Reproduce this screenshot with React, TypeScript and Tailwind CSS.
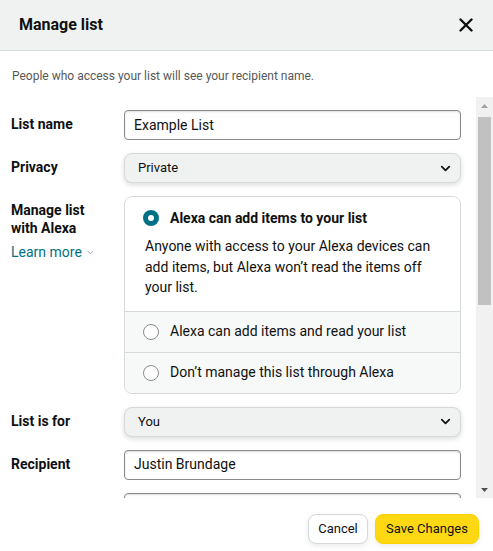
import { ChevronDown } from "lucide-react";

function Label({ children }: { children: React.ReactNode }) {
  return (
    <div className="w-[124px] shrink-0 pl-[11px] pt-[5px] text-[14px] leading-[18px] font-bold text-[#0f1111]">
      {children}
    </div>
  );
}

function Select({ value }: { value: string }) {
  return (
    <div className="flex-1 h-[30px] flex items-center justify-between pl-[13px] pr-[7px] rounded-[8px] bg-[#f0f2f2] border border-[#d5d9d9] shadow-[0_2px_5px_rgba(15,17,17,0.15)] text-[13px] text-[#0f1111]">
      <span>{value}</span>
      <ChevronDown size={15} strokeWidth={2.8} className="text-[#0f1111]" />
    </div>
  );
}

function Input({ value }: { value: string }) {
  return (
    <div className="flex-1 h-[30px] flex items-center pl-[9px] rounded-[4px] border border-[#888c8c] bg-white text-[14px] text-[#0f1111] shadow-[inset_0_1px_2px_rgba(15,17,17,0.15)]">
      {value}
    </div>
  );
}

function Radio({ checked }: { checked?: boolean }) {
  return checked ? (
    <span className="w-[16px] h-[16px] rounded-full bg-[#007185] flex items-center justify-center shrink-0">
      <span className="w-[6px] h-[6px] rounded-full bg-white" />
    </span>
  ) : (
    <span className="w-[16px] h-[16px] rounded-full border border-[#888c8c] bg-white shrink-0" />
  );
}

export default function App() {
  return (
    <div className="w-[493px] h-[551px] bg-white flex flex-col overflow-hidden text-[#0f1111] font-['Roboto',sans-serif]">
      {/* header */}
      <div className="h-[51px] shrink-0 bg-[#f0f2f2] border-b border-[#d5d9d9] flex items-center justify-between pl-[19px] pr-[20px]">
        <h1 className="text-[16px] font-bold">Manage list</h1>
        <svg width="14" height="14" viewBox="0 0 14 14">
          <path d="M1.5 1.5L12.5 12.5M12.5 1.5L1.5 12.5" stroke="#0f1111" strokeWidth="2.4" strokeLinecap="round" />
        </svg>
      </div>

      <p className="pl-[12px] pt-[17px] pb-[13px] text-[12px] leading-[16px] text-[#565959]">
        People who access your list will see your recipient name.
      </p>

      {/* scroll area */}
      <div className="h-[401px] shrink-0 flex">
        <div className="flex-1 overflow-hidden pt-[13px] pr-[15px] flex flex-col gap-[13px]">
          <div className="flex">
            <Label>List name</Label>
            <Input value="Example List" />
          </div>
          <div className="flex">
            <Label>Privacy</Label>
            <Select value="Private" />
          </div>
          <div className="flex">
            <div className="w-[124px] shrink-0 pl-[11px] pt-[5px]">
              <div className="text-[14px] leading-[18px] font-bold">Manage list<br />with Alexa</div>
              <div className="mt-[6px] text-[14px] leading-[18px] text-[#007185] flex items-center gap-[4px]">
                Learn more
                <ChevronDown size={9} strokeWidth={2} className="text-[#888c8c]" />
              </div>
            </div>
            <div className="flex-1 rounded-[8px] border border-[#d5d9d9] overflow-hidden text-[14px]">
              <div className="bg-white pl-[18px] pr-[14px] pt-[12px] pb-[13px]">
                <div className="flex items-center gap-[11px] leading-[18px] font-bold">
                  <Radio checked />
                  Alexa can add items to your list
                </div>
                <p className="mt-[9px] pl-[2px] leading-[20.5px] text-[#0f1111]">
                  Anyone with access to your Alexa devices can add items, but Alexa won’t read the items off your list.
                </p>
              </div>
              <div className="h-[41px] bg-[#f7f8f8] border-t border-[#d5d9d9] flex items-center gap-[11px] pl-[18px]">
                <Radio />
                Alexa can add items and read your list
              </div>
              <div className="h-[41px] bg-[#f7f8f8] border-t border-[#d5d9d9] flex items-center gap-[11px] pl-[18px]">
                <Radio />
                Don’t manage this list through Alexa
              </div>
            </div>
          </div>
          <div className="flex">
            <Label>List is for</Label>
            <Select value="You" />
          </div>
          <div className="flex">
            <Label>Recipient</Label>
            <Input value="Justin Brundage" />
          </div>
          <div className="flex">
            <div className="w-[124px] shrink-0" />
            <Input value="" />
          </div>
        </div>
        {/* scrollbar */}
        <div className="w-[17px] shrink-0 bg-[#f1f1f1] flex flex-col items-center">
          <div className="h-[17px] flex items-center justify-center">
            <svg width="7" height="4" viewBox="0 0 7 4"><path d="M0 4L3.5 0L7 4Z" fill="#a3a3a3" /></svg>
          </div>
          <div className="w-[13px] h-[188px] mt-[3px] bg-[#c1c1c1]" />
          <div className="flex-1" />
          <div className="h-[17px] flex items-center justify-center">
            <svg width="7" height="4" viewBox="0 0 7 4"><path d="M0 0L3.5 4L7 0Z" fill="#505050" /></svg>
          </div>
        </div>
      </div>

      {/* footer */}
      <div className="flex justify-end gap-[7px] pt-[16px] pr-[14px]">
        <button className="h-[30px] w-[60px] rounded-[8px] bg-white border border-[#d5d9d9] shadow-[0_2px_5px_rgba(213,217,217,0.5)] text-[13px] text-[#0f1111]">
          Cancel
        </button>
        <button className="h-[30px] w-[104px] rounded-[8px] bg-[#ffd814] border border-[#fcd200] shadow-[0_2px_5px_rgba(213,217,217,0.5)] text-[13px] text-[#0f1111]">
          Save Changes
        </button>
      </div>
    </div>
  );
}
